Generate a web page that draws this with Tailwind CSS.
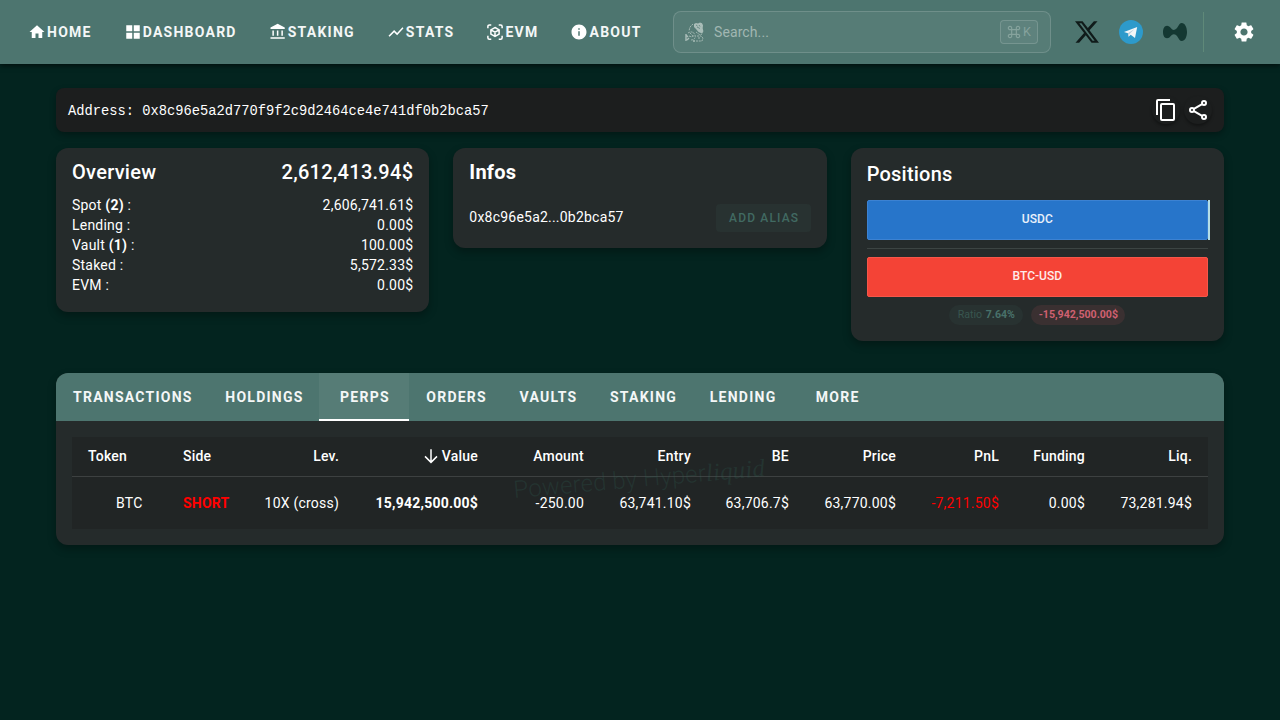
<!DOCTYPE html>
<html lang="en">
  <head>
    <meta charset="UTF-8" />
    <meta name="viewport" content="width=device-width, initial-scale=1.0" />
    <title>Hyperliquid Explorer</title>
    <script src="https://cdn.jsdelivr.net/npm/@tailwindcss/browser@4"></script>
  </head>
  <body class="h-screen overflow-hidden bg-[#03241f] font-[Roboto,sans-serif] text-sm tracking-[0.22px] text-white">
    <header class="relative flex h-16 items-center bg-[#4d756f] pl-7 shadow-[0_2px_5px_rgba(0,0,0,0.55)]">
      <nav class="flex w-[645px] shrink-0 gap-8 font-bold tracking-[1.25px] text-[#f4f7f7]">
        <a class="flex items-center gap-px">
          <svg class="size-[18px] fill-white" viewBox="0 0 24 24"><path d="M10 20v-6h4v6h5v-8h3L12 3 2 12h3v8z" /></svg>
          HOME
        </a>
        <a class="flex items-center gap-px">
          <svg class="size-[18px] fill-white" viewBox="0 0 24 24"><path d="M3 11h8V3H3zM3 21h8v-8H3zM13 21h8v-8h-8zM13 3v8h8V3z" /></svg>
          DASHBOARD
        </a>
        <a class="flex items-center gap-px">
          <svg class="size-[18px] fill-white" viewBox="0 0 24 24"><path d="M6.500 10h-2v7h2v-7zm6 0h-2v7h2v-7zm8.500 9H2v2h19v-2zm-2.500-9h-2v7h2v-7zM11.500 1L2 6v2h19V6l-9.500-5z" /></svg>
          STAKING
        </a>
        <a class="flex items-center gap-px">
          <svg class="size-[18px] fill-white" viewBox="0 0 24 24"><path d="M3.500 18.490l6-6.010 4 4L22 6.920l-1.410-1.410-7.090 7.970-4-4L2 16.990z" /></svg>
          STATS
        </a>
        <a class="flex items-center gap-px">
          <svg class="size-[18px] fill-none stroke-white stroke-2" viewBox="0 0 24 24"><path d="M2.500 7V4.500a2 2 0 0 1 2-2H7M17 2.500h2.500a2 2 0 0 1 2 2V7M21.500 17v2.500a2 2 0 0 1-2 2H17M7 21.500H4.500a2 2 0 0 1-2-2V17M12 6l5.500 3.100v5.800L12 18l-5.500-3.100V9.100zM6.500 9.100l5.500 3.100 5.500-3.100M12 12.200V18" /></svg>
          EVM
        </a>
        <a class="flex items-center gap-px">
          <svg class="size-[18px] fill-white" viewBox="0 0 24 24"><path d="M12 2C6.480 2 2 6.480 2 12s4.480 10 10 10 10-4.480 10-10S17.520 2 12 2zm1 15h-2v-6h2v6zm0-8h-2V7h2v2z" /></svg>
          ABOUT
        </a>
      </nav>

      <div class="flex h-[42px] w-[378px] shrink-0 items-center rounded-lg border border-white/15 bg-white/5 pr-3 pl-[11px]">
        <svg class="size-5" viewBox="0 0 20 20" fill="none" stroke="#a9bdb8" stroke-width="0.9">
          <path fill="#a9bdb8" stroke="none" d="M9 2l2-1 2 .5 2-1 2 .8 1 2-.3 3 .6 3-1.800 2-3-1.400-2.500-3L9 5z" />
          <path stroke="#587e78" stroke-width="0.8" d="M11 3l1.500 1M14 3l1 1.500M12 5l3 1.500" />
          <path stroke-dasharray="2 0.8" d="M8 2L5 5 4 9M3 11c3-2 6-1 7 2s-1 5-4 5M5 11l2 2M4 14l3 1M11 10l4 3 2-1 1-4M12 14h4l2 2-1 3h-6M13 16h2" />
          <path stroke-width="1.400" d="M1 12v7M1 13l2 2M2 18l2-2M7 14h1.500M8 19h2" />
        </svg>
        <span class="ml-[9px] flex-1 tracking-[0.1px] text-[#a1b7b2]">Search...</span>
        <kbd class="flex h-6 w-[38px] items-center justify-center gap-0.5 rounded border border-white/15 bg-white/5 font-[Roboto,sans-serif] text-[12.5px] text-[#86a39d]">
          <svg class="size-[14px] fill-none stroke-[#86a39d] stroke-[2]" viewBox="0 0 24 24"><path d="M8 8h8v8H8zM8 8H5.500A2.900 2.900 0 1 1 8 5.500zM16 8V5.500A2.900 2.900 0 1 1 18.500 8zM16 16h2.500A2.900 2.900 0 1 1 16 18.500zM8 16v2.500A2.900 2.900 0 1 1 5.500 16z" /></svg>
          K
        </kbd>
      </div>

      <div class="ml-6 flex items-center gap-5">
        <svg class="size-6 fill-[#101b1a]" viewBox="1.250 2.250 21.600 19.500"><path d="M18.244 2.250h3.308l-7.227 8.260 8.502 11.240H16.170l-5.214-6.817L4.990 21.750H1.680l7.730-8.835L1.254 2.250H8.080l4.713 6.231zm-1.161 17.520h1.833L7.084 4.126H5.117z" /></svg>
        <svg class="size-6" viewBox="0 0 24 24">
          <circle cx="12" cy="12" r="12" fill="#2d9acb" />
          <path fill="#f2f6f8" d="M5 12.100L18.200 7 16 17.900l-4.300-3.200-2.100 2-.7-3.500z" />
          <path fill="#b9cedb" d="M8.900 13.200l6.700-4.300-5.200 5.200-.8 2.600z" />
        </svg>
        <svg class="size-6 fill-[#143832]" viewBox="0 0 24 24"><path d="M24 12c0 5-2.200 9-5.200 9-3.600 0-3.800-6.700-8.100-6.700-2.800 0-3.300 4-6.700 4-2.600 0-4-2.800-4-6.200s1.400-6.300 4-6.300c3.400 0 4 4.100 6.800 4.100C15 9.900 15.200 3 18.800 3 21.800 3 24 7 24 12z" /></svg>
      </div>
      <div class="ml-4 h-10 w-px bg-[#5f8979]"></div>
      <svg class="ml-7 size-6 fill-white" viewBox="0 0 24 24"><path d="M19.140 12.940c.04-.3.060-.61.060-.94 0-.32-.02-.64-.07-.94l2.030-1.580c.18-.14.230-.41.120-.61l-1.920-3.320c-.12-.22-.37-.29-.59-.22l-2.390.96c-.5-.38-1.030-.7-1.620-.94l-.36-2.540c-.04-.24-.24-.41-.48-.41h-3.840c-.24 0-.43.170-.47.410l-.36 2.540c-.59.240-1.130.570-1.620.940l-2.390-.96c-.22-.08-.47 0-.59.220L2.740 8.870c-.12.210-.08.470.120.610l2.030 1.580c-.05.300-.09.630-.09.940s.02.640.070.940l-2.030 1.580c-.18.140-.23.410-.12.610l1.920 3.320c.12.220.370.290.590.220l2.390-.96c.5.380 1.030.700 1.620.940l.36 2.540c.05.240.240.410.480.410h3.840c.24 0 .44-.17.470-.41l.36-2.540c.59-.24 1.130-.56 1.620-.94l2.390.960c.22.080.470 0 .59-.22l1.920-3.320c.12-.22.070-.47-.12-.61l-2.010-1.580zM12 15.600c-1.980 0-3.600-1.620-3.600-3.600s1.620-3.600 3.600-3.600 3.600 1.620 3.600 3.600-1.620 3.600-3.600 3.600z" /></svg>
    </header>

    <main class="mx-14 pt-6">
      <!-- Address bar -->
      <div class="flex h-11 items-center justify-between rounded-lg bg-[#1c1e1e] px-3 shadow-[0_3px_6px_rgba(0,0,0,0.3)]">
        <span class="pt-1 font-['Liberation_Mono',monospace] text-[13.75px] tracking-normal">Address: 0x8c96e5a2d770f9f2c9d2464ce4e741df0b2bca57</span>
        <div class="flex gap-1">
          <button class="flex size-7 items-center justify-center rounded-full shadow-[0_2px_3px_rgba(0,0,0,0.35)]">
            <svg class="size-6 fill-white" viewBox="0 0 24 24"><path d="M19 21H8V7h11m0-2H8a2 2 0 0 0-2 2v14a2 2 0 0 0 2 2h11a2 2 0 0 0 2-2V7a2 2 0 0 0-2-2m-3-4H4a2 2 0 0 0-2 2v14h2V3h12z" /></svg>
          </button>
          <button class="flex size-7 items-center justify-center rounded-full shadow-[0_2px_3px_rgba(0,0,0,0.35)]">
            <svg class="size-6 fill-none stroke-white stroke-2" viewBox="0 0 24 24"><circle cx="18" cy="5" r="2" /><circle cx="6" cy="12" r="2" /><circle cx="18" cy="19" r="2" /><path d="M7.900 10.900l8.200-4.800M7.900 13.100l8.200 4.800" /></svg>
          </button>
        </div>
      </div>

      <!-- Cards -->
      <div class="mt-4 grid grid-cols-3 items-start gap-6">
        <section class="h-[164px] rounded-xl bg-[#252b2b] px-4 pt-2 shadow-[0_4px_8px_rgba(0,0,0,0.3)]">
          <h2 class="flex h-8 items-center justify-between text-xl font-medium tracking-[0.28px]">
            <span>Overview</span><span>2,612,413.94$</span>
          </h2>
          <dl class="mt-[7px] leading-5">
            <div class="flex justify-between"><dt>Spot <b>(2)</b> :</dt><dd>2,606,741.61$</dd></div>
            <div class="flex justify-between"><dt>Lending :</dt><dd>0.00$</dd></div>
            <div class="flex justify-between"><dt>Vault <b>(1)</b> :</dt><dd>100.00$</dd></div>
            <div class="flex justify-between"><dt>Staked :</dt><dd>5,572.33$</dd></div>
            <div class="flex justify-between"><dt>EVM :</dt><dd>0.00$</dd></div>
          </dl>
        </section>

        <section class="h-[100px] rounded-xl bg-[#252b2b] px-4 pt-2 shadow-[0_4px_8px_rgba(0,0,0,0.3)]">
          <h2 class="text-xl leading-8 font-bold">Infos</h2>
          <div class="mt-4 flex items-center justify-between">
            <span class="pb-0.5">0x8c96e5a2...0b2bca57</span>
            <button class="h-7 w-[95px] rounded bg-[#283231] pl-0.5 text-xs font-medium tracking-[1.15px] text-[#416a62]">ADD ALIAS</button>
          </div>
        </section>

        <section class="h-[193px] rounded-xl bg-[#252b2b] px-4 pt-2.5 shadow-[0_4px_8px_rgba(0,0,0,0.3)]">
          <h2 class="text-xl leading-8 font-medium">Positions</h2>
          <div class="mt-2.5 -mr-0.5 flex h-10 text-xs font-medium tracking-[0.1px] text-white/90">
            <div class="flex flex-1 items-center justify-center rounded-xs border border-[#3c82d2] bg-[#2775ca] pb-0.5">USDC</div>
            <div class="w-0.5 bg-[#b5dfe6]"></div>
          </div>
          <div class="my-2 h-px bg-[#3c4443]"></div>
          <div class="flex h-10 items-center justify-center rounded-xs border border-[#f6564a] bg-[#f44336] pb-0.5 text-xs font-medium tracking-normal text-white/90">BTC-USD</div>
          <div class="mt-2 flex justify-center gap-2 text-[10.6px] leading-5 tracking-normal">
            <span class="w-[74px] rounded-full bg-[#283231] text-center text-[#38564f]">Ratio <b class="ml-px text-[#48716a]">7.64%</b></span>
            <span class="w-[94px] rounded-full bg-[#3a3031] text-center font-bold text-[#cf6070]">-15,942,500.00$</span>
          </div>
        </section>
      </div>

      <!-- Details -->
      <section class="relative mt-8 h-[172px] overflow-hidden rounded-xl bg-[#252b2b] shadow-[0_4px_8px_rgba(0,0,0,0.3)]">
        <div class="flex h-12 bg-[#4d756f] font-bold tracking-[1.25px] text-[#f4f7f7]">
          <button class="min-w-[90px] pr-[15.6px] pl-[17px]">TRANSACTIONS</button>
          <button class="min-w-[90px] pr-[15.6px] pl-[17px]">HOLDINGS</button>
          <button class="min-w-[90px] border-b-2 border-white bg-white/5 pt-0.5 pr-[15.6px] pl-[17px]">PERPS</button>
          <button class="min-w-[90px] pr-[15.6px] pl-[17px]">ORDERS</button>
          <button class="min-w-[90px] pr-[15.6px] pl-[17px]">VAULTS</button>
          <button class="min-w-[90px] pr-[15.6px] pl-[17px]">STAKING</button>
          <button class="min-w-[90px] pr-[15.6px] pl-[17px]">LENDING</button>
          <button class="min-w-[90px] pr-[15.6px] pl-[17px]">MORE</button>
        </div>
        <div class="p-4">
          <table class="w-full table-fixed border-separate border-spacing-0 bg-[#212525] text-right">
            <colgroup>
              <col class="w-[95px]" /><col class="w-[82px]" /><col class="w-[106px]" /><col class="w-[139px]" />
              <col class="w-[106px]" /><col class="w-[107px]" /><col class="w-[98px]" /><col class="w-[107px]" />
              <col class="w-[103px]" /><col class="w-[86px]" /><col class="w-[107px]" />
            </colgroup>
            <thead>
              <tr class="h-10 *:border-b *:border-[#3d4141] *:pb-0.5 *:font-medium">
                <th class="pl-4 text-left">Token</th>
                <th class="pl-4 text-left">Side</th>
                <th class="pr-4">Lev.</th>
                <th class="pr-4">
                  <div class="flex items-center justify-end gap-0.5">
                    <svg class="size-[18px] fill-none stroke-white stroke-2" viewBox="0 0 24 24"><path d="M12 3v17M4 12.500l8 8 8-8" /></svg>
                    Value
                  </div>
                </th>
                <th class="pr-4">Amount</th>
                <th class="pr-4">Entry</th>
                <th class="pr-4">BE</th>
                <th class="pr-4">Price</th>
                <th class="pr-4">PnL</th>
                <th class="pr-4">Funding</th>
                <th class="pr-4">Liq.</th>
              </tr>
            </thead>
            <tbody>
              <tr class="h-[52px] whitespace-nowrap">
                <td class="pl-11 text-left">BTC</td>
                <td class="pl-4 text-left font-bold text-[#f00]">SHORT</td>
                <td class="pr-4">10X (cross)</td>
                <td class="pr-4 font-bold">15,942,500.00$</td>
                <td class="pr-4">-250.00</td>
                <td class="pr-4">63,741.10$</td>
                <td class="pr-4">63,706.7$</td>
                <td class="pr-4">63,770.00$</td>
                <td class="pr-4 text-[#f00]">-7,211.50$</td>
                <td class="pr-4">0.00$</td>
                <td class="pr-4">73,281.94$</td>
              </tr>
            </tbody>
          </table>
        </div>
        <!-- Watermark -->
        <div class="pointer-events-none absolute top-[89px] left-[457px] -rotate-5 text-2xl font-light tracking-[0.15px] whitespace-nowrap text-[#2f6157]/25">Powered by Hyper<i class="font-['Liberation_Serif',serif] text-[25px]">liquid</i></div>
      </section>
    </main>
  </body>
</html>
